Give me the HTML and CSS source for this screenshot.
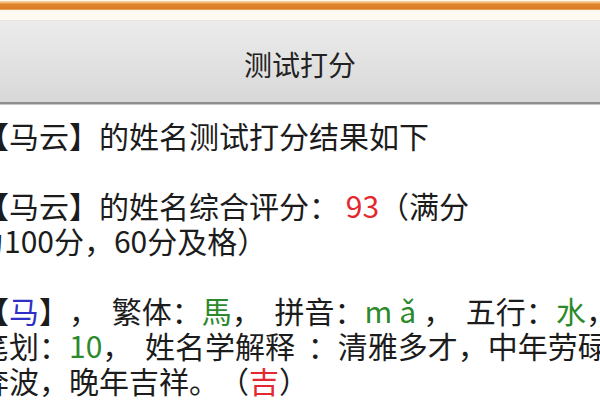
FILE: index.html
```html
<!DOCTYPE html>
<html lang="zh-CN">
<head>
<meta charset="utf-8">
<title>测试打分</title>
<link rel="stylesheet" href="styles.css">
</head>
<body>
<div class="topbar"><div class="stripe"></div></div>
<header class="header"><h1 class="title">测试打分</h1></header>
<main class="content">
  <p class="line">【马云】的姓名测试打分结果如下</p>
  <p class="line blank">&nbsp;</p>
  <p class="line">【马云】的姓名综合评分： <span class="red">93</span>（满分</p>
  <p class="line wrapped">为100分，60分及格）</p>
  <p class="line blank">&nbsp;</p>
  <p class="line spaced">【<span class="blue">马</span>】， 繁体：<span class="green">馬</span>， 拼音：<span class="green pinyin">mǎ</span>， 五行：<span class="green">水</span>，</p>
  <p class="line spaced">笔划：<span class="green">10</span>， 姓名学解释 ：清雅多才，中年劳碌</p>
  <p class="line">奔波，晚年吉祥。（<span class="red">吉</span>）</p>
</main>
</body>
</html>
```
FILE: styles.css
```css
html, body {
  margin: 0;
  padding: 0;
  background: #ffffff;
  overflow: hidden;
  width: 600px;
  height: 400px;
}
body {
  font-family: "Noto Sans CJK SC", "Noto Sans", sans-serif;
  color: #1c1c1c;
}
.topbar {
  height: 19px;
  background: #fffaf1;
  padding-top: 1px;
  border-bottom: 1px solid #e6e6e6;
}
.stripe {
  height: 9px;
  background: linear-gradient(to bottom, #f9d6a6 0, #f1b36a 2px, #e0842c 3px, #dc7d24 8px, #f3c48e 9px);
}
.header {
  height: 81px;
  background: linear-gradient(to bottom, #ececec, #d8d8d8);
  border-bottom: 2px solid #8e8e8e;
  display: flex;
  align-items: center;
  justify-content: center;
  box-shadow: 0 1px 0 #c8c8c8;
}
.title {
  margin: 0;
  padding-top: 4px;
  font-size: 28px;
  font-weight: normal;
  color: #222222;
}
.content {
  padding-top: 14px;
  margin-left: -21px;
}
.line {
  margin: 0;
  font-size: 30px;
  line-height: 35px;
  white-space: nowrap;
  text-spacing-trim: space-all;
}
.spaced {
  word-spacing: 6px;
}
.wrapped {
  text-indent: -5px;
}
.red { color: #e3282f; }
.green { color: #2c8a2c; }
.blue { color: #2f2fc8; }
.pinyin { letter-spacing: 7px; }
```
